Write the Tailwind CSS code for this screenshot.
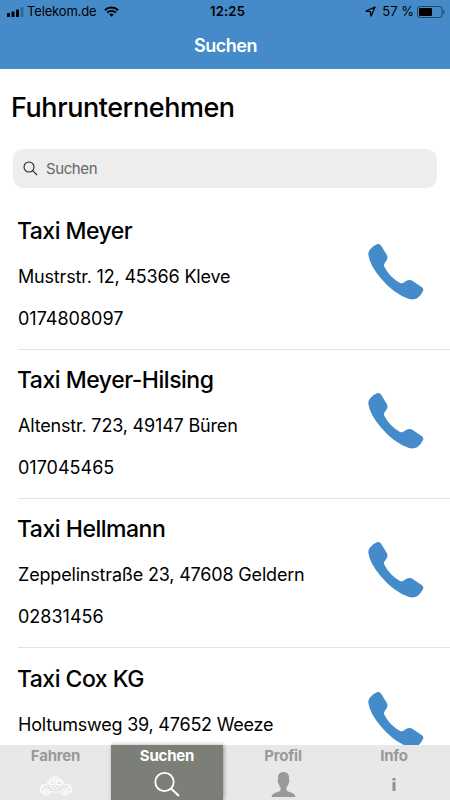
<!DOCTYPE html>
<html lang="de">

<head>
    <meta charset="UTF-8">
    <meta name="viewport" content="width=device-width, initial-scale=1.0">
    <title>Suchen</title>
    <script src="https://cdn.jsdelivr.net/npm/@tailwindcss/browser@4"></script>
</head>

<body class="bg-white text-black font-['Inter',sans-serif] h-screen overflow-hidden flex flex-col">

    <!-- Header -->
    <header class="h-[69px] shrink-0 bg-[#458bc9]">
        <div class="h-[23px] grid grid-cols-3 items-center pl-[7px] pr-[5px] text-[13px] leading-[23px]">
            <div class="flex items-center">
                <svg class="w-[17px] h-[10px] shrink-0" viewBox="0 0 17 10">
                    <rect x="0" y="6" width="3" height="4" rx=".6" />
                    <rect x="4.5" y="4.5" width="3" height="5.5" rx=".6" />
                    <rect x="9" y="2.5" width="3" height="7.5" rx=".6" />
                    <rect x="13.5" y="0" width="3" height="10" rx=".6" fill-opacity=".25" />
                </svg>
                <span class="ml-[3px] whitespace-nowrap tracking-[-0.15px]">Telekom.de</span>
                <svg class="ml-[7px] w-[15px] h-[11px] shrink-0" viewBox="0 0 15 11" fill="none" stroke="#000" stroke-width="1.9">
                    <path d="M.8 4.2a9.6 9.6 0 0 1 13.4 0" />
                    <path d="M3.1 6.7a6.2 6.2 0 0 1 8.8 0" />
                    <path d="M7.5 10.8 5.2 8.5a3.3 3.3 0 0 1 4.6 0z" fill="#000" stroke="none" />
                </svg>
            </div>
            <div class="text-center font-semibold pl-[3px] tracking-[0.2px]">12:25</div>
            <div class="flex items-center justify-end">
                <svg class="w-[11px] h-[11px] mr-[6px]" viewBox="0 0 11 11" fill="none" stroke="#000" stroke-width="1.3" stroke-linejoin="round">
                    <path d="M10 1 1 5l4.300.700.7 4.300z" />
                </svg>
                <span class="whitespace-nowrap">57 %</span>
                <svg class="ml-[3px] w-[28px] h-[12px] shrink-0" viewBox="0 0 28 12">
                    <rect x=".5" y=".5" width="24.5" height="11" rx="2.5" fill="none" stroke="#000" stroke-opacity=".5" />
                    <rect x="2" y="2" width="13" height="8" rx="1" />
                    <path d="M26.2 4v4c.9-.3 1.4-1.100 1.400-2s-.5-1.700-1.400-2z" fill-opacity=".5" />
                </svg>
            </div>
        </div>
        <h1 class="h-[46px] leading-[46px] pl-px text-center text-lg font-semibold text-white tracking-[-0.5px]">Suchen</h1>
    </header>

    <!-- Company list -->
    <main class="flex-1 min-h-0 overflow-hidden">
        <h2 class="pl-[11px] pt-[22px] text-[27px] leading-[34px] font-medium tracking-[-0.45px]">Fuhrunternehmen</h2>
        <div class="mt-[24px] mx-[13px] h-[39px] rounded-[11px] bg-[#ededed] flex items-center pl-[10px] text-[15px] text-[#666]">
            <svg class="w-[15px] h-[15px] mr-2" viewBox="0 0 15 15" fill="none" stroke="#222" stroke-width="1.1">
                <circle cx="6" cy="6" r="5" />
                <path d="m9.600 9.600 4.400 4.400" />
            </svg>
            <span class="pt-px tracking-[-0.4px]">Suchen</span>
        </div>

        <ul class="mt-[12.500px] ml-[18px]">
            <li class="h-[149.300px] border-b border-[#e2e2e2] flex justify-between">
                <div class="pt-[15.400px]">
                    <h3 class="text-[23px] leading-[30px] font-medium tracking-[-0.52px] -ml-px">Taxi Meyer</h3>
                    <p class="mt-[18.800px] text-lg leading-6 tracking-[-0.18px]">Mustrstr. 12, 45366 Kleve</p>
                    <p class="mt-[18px] text-lg leading-6">0174808097</p>
                </div>
                <svg class="w-[56px] h-[57px] mt-[42.400px] mr-[26px]" viewBox="0 0 56 57" fill="#458bc9">
                    <path d="M2 6.500Q5 2.500 9.500 1Q11.500.500 13 2.500L18.800 12Q20.300 14.500 18.500 17.500L16.500 20.500Q15.600 22 16.500 24Q21.500 34 32 40Q33.500 40.500 35 40L38.500 37.800Q40.500 36.400 43.500 37.300L54 44.300Q56 46 55 48Q53 52.500 49.500 55Q46.500 57.300 41 56Q26 51 13 35.500Q1.500 22 .3 11.500Q.2 8.800 2 6.500Z" />
                </svg>
            </li>
            <li class="h-[149.300px] border-b border-[#e2e2e2] flex justify-between">
                <div class="pt-[15.400px]">
                    <h3 class="text-[23px] leading-[30px] font-medium tracking-[-0.48px] -ml-px">Taxi Meyer-Hilsing</h3>
                    <p class="mt-[18.800px] text-lg leading-6 tracking-[-0.18px]">Altenstr. 723, 49147 Büren</p>
                    <p class="mt-[18px] text-lg leading-6">017045465</p>
                </div>
                <svg class="w-[56px] h-[57px] mt-[42.400px] mr-[26px]" viewBox="0 0 56 57" fill="#458bc9">
                    <path d="M2 6.500Q5 2.500 9.500 1Q11.500.500 13 2.500L18.800 12Q20.300 14.500 18.500 17.500L16.500 20.500Q15.600 22 16.500 24Q21.500 34 32 40Q33.500 40.500 35 40L38.500 37.800Q40.500 36.400 43.500 37.300L54 44.300Q56 46 55 48Q53 52.500 49.500 55Q46.500 57.300 41 56Q26 51 13 35.500Q1.500 22 .3 11.500Q.2 8.800 2 6.500Z" />
                </svg>
            </li>
            <li class="h-[149.300px] border-b border-[#e2e2e2] flex justify-between">
                <div class="pt-[15.400px]">
                    <h3 class="text-[23px] leading-[30px] font-medium tracking-[-0.48px] -ml-px">Taxi Hellmann</h3>
                    <p class="mt-[18.800px] text-lg leading-6 tracking-[-0.18px]">Zeppelinstraße 23, 47608 Geldern</p>
                    <p class="mt-[18px] text-lg leading-6">02831456</p>
                </div>
                <svg class="w-[56px] h-[57px] mt-[42.400px] mr-[26px]" viewBox="0 0 56 57" fill="#458bc9">
                    <path d="M2 6.500Q5 2.500 9.500 1Q11.500.500 13 2.500L18.800 12Q20.300 14.500 18.500 17.500L16.500 20.500Q15.600 22 16.500 24Q21.500 34 32 40Q33.500 40.500 35 40L38.500 37.800Q40.500 36.400 43.500 37.300L54 44.300Q56 46 55 48Q53 52.500 49.500 55Q46.500 57.300 41 56Q26 51 13 35.500Q1.500 22 .3 11.500Q.2 8.800 2 6.500Z" />
                </svg>
            </li>
            <li class="h-[149.300px] flex justify-between">
                <div class="pt-[15.400px]">
                    <h3 class="text-[23px] leading-[30px] font-medium tracking-[-0.52px] -ml-px">Taxi Cox KG</h3>
                    <p class="mt-[18.800px] text-lg leading-6 tracking-[-0.22px]">Holtumsweg 39, 47652 Weeze</p>
                </div>
                <svg class="w-[56px] h-[57px] mt-[42.400px] mr-[26px]" viewBox="0 0 56 57" fill="#458bc9">
                    <path d="M2 6.500Q5 2.500 9.500 1Q11.500.500 13 2.500L18.800 12Q20.300 14.500 18.500 17.500L16.500 20.500Q15.600 22 16.500 24Q21.500 34 32 40Q33.500 40.500 35 40L38.500 37.800Q40.500 36.400 43.500 37.300L54 44.300Q56 46 55 48Q53 52.500 49.500 55Q46.500 57.300 41 56Q26 51 13 35.500Q1.500 22 .3 11.500Q.2 8.800 2 6.500Z" />
                </svg>
            </li>
        </ul>
    </main>

    <!-- Tab bar -->
    <nav class="h-[55px] shrink-0 bg-[#e8e8e8] grid grid-cols-[111px_112px_120px_102px] text-center text-[15px] leading-[22px] font-bold text-[#999]">
        <div class="flex flex-col items-center">
            <span class="tracking-[-0.2px]">Fahren</span>
            <svg class="mt-[9px] w-[33px] h-[20px]" viewBox="0 0 33 20" fill="none" stroke="#fff" stroke-width="1.1" stroke-linejoin="round">
                <path d="M4 16H1.500V13L3 9.500 8 8.500 11 3.500H22L26 8.500 31 9.500 32 12.500V16H29M10.500 16H22.500" />
                <path d="M14 3.500V1H18.500V3.500M10.500 8.500 12.500 5H15.500V8.500ZM17.500 5H21.500L24 8.500H17.500Z" />
                <path d="M2 11.500H5M28.500 11.500H31.500M11 10.500H13M15 10.500H17M19 10.500H21M13 12.500H15M17 12.500H19" />
                <circle cx="7.200" cy="16" r="3" />
                <circle cx="25.800" cy="16" r="3" />
                <circle cx="7.200" cy="16" r=".7" />
                <circle cx="25.800" cy="16" r=".7" />
            </svg>
        </div>
        <div class="flex flex-col items-center bg-[#7c7f78] text-white shadow-[1px_0_4px_rgba(0,0,0,0.35)]">
            <span class="tracking-[-0.2px]">Suchen</span>
            <svg class="mt-[4px] w-[26px] h-[26px]" viewBox="0 0 26 26" fill="none" stroke="#fff" stroke-width="1.8">
                <circle cx="10.500" cy="11" r="9.200" />
                <path d="m17 17.500 8 7.500" stroke-width="2.200" />
            </svg>
        </div>
        <div class="flex flex-col items-center">
            <span class="tracking-[-0.2px]">Profil</span>
            <svg class="mt-[5px] w-[25px] h-[25px]" viewBox="0 0 25 25" fill="#999">
                <path d="M12.500 0C8.800 0 7 2.300 7 5.500V8C6.300 8.500 6.600 10.500 7.600 11.500 8 13.300 8.600 14.500 9.500 15.400V18C9.500 20.500 1 19.500.5 25H24.500C24 19.500 15.500 20.500 15.500 18V15.400C16.400 14.500 17 13.300 17.400 11.500 18.400 10.500 18.700 8.500 18 8V5.500C18 2.300 16.200 0 12.500 0Z" />
            </svg>
        </div>
        <div class="flex flex-col items-center">
            <span class="tracking-[-0.2px]">Info</span>
            <svg class="mt-[11px] w-[4px] h-[13px]" viewBox="0 0 4 13" fill="#909090">
                <rect x=".5" y="0" width="3" height="2.500" />
                <rect x=".5" y="4" width="3" height="9" />
            </svg>
        </div>
    </nav>

</body>

</html>
